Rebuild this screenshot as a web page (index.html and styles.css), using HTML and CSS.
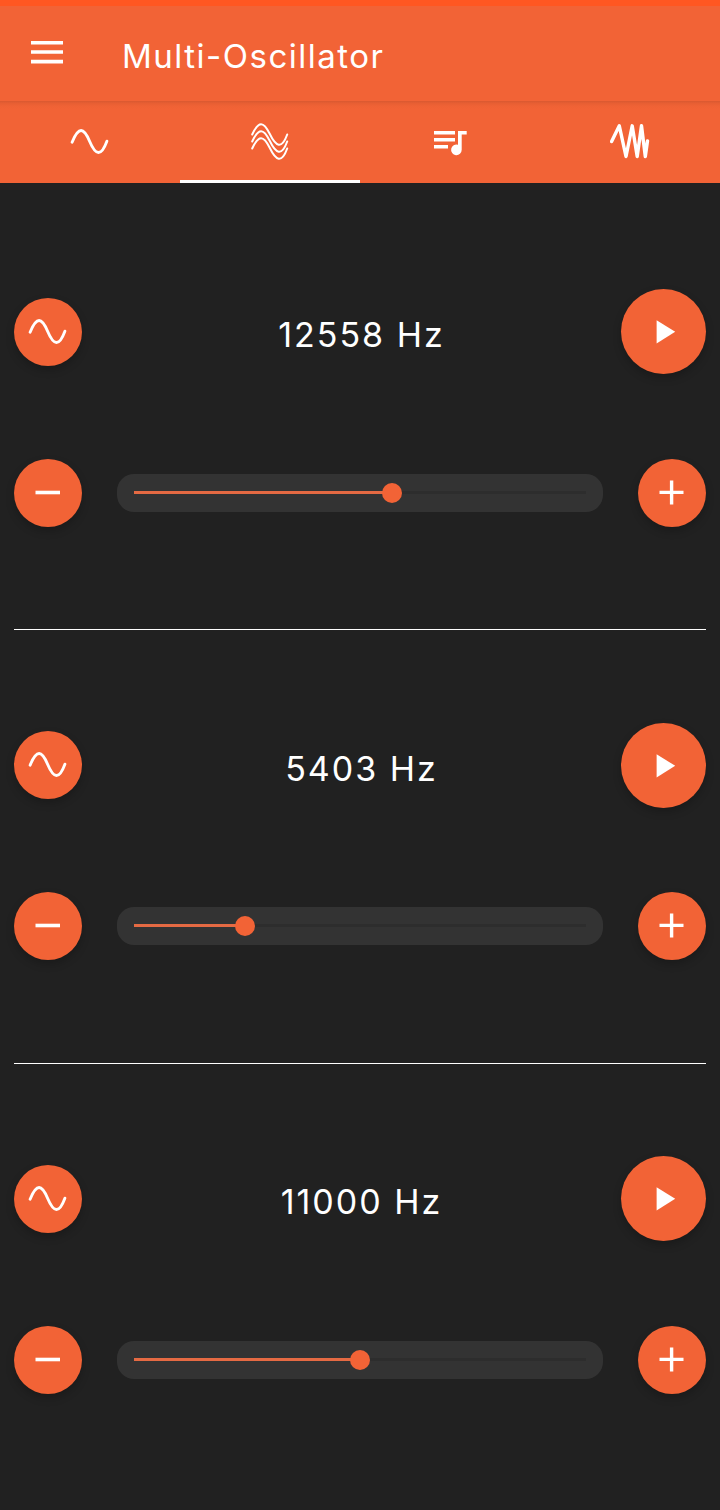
FILE: index.html
```html
<!DOCTYPE html>
<html lang="en">
<head>
<meta charset="utf-8">
<title>Multi-Oscillator</title>
<link rel="stylesheet" href="styles.css">
</head>
<body>
<svg class="defs" width="0" height="0">
  <symbol id="wave" viewBox="0 0 40 28"><path d="M2.100 14.200C8.700-1.700 13.700-.700 19.700 13.500S31.200 28.700 36.900 13.200" fill="none" stroke="currentColor" stroke-width="2.900" stroke-linecap="round"/></symbol>
  <symbol id="minus" viewBox="0 0 26 26"><path d="M.500 10.700h24.500v3.600H.500z" fill="currentColor"/></symbol>
  <symbol id="plus" viewBox="0 0 26 26"><path d="M.500 10.700h10.400V.500h3.400v10.200h10.200v3.400H14.300v10.400h-3.400V14.100H.500z" fill="currentColor"/></symbol>
  <symbol id="play" viewBox="0 0 20 24"><path d="M.600.200v23.300L19.200 11.800z" fill="currentColor"/></symbol>
</svg>
<div class="status"></div>
<header class="toolbar">
  <svg class="menu" viewBox="0 0 32 24"><path d="M0 0h32v3.600H0zM0 9.200h32v3.600H0zM0 18.700h32v3.800H0z" fill="currentColor"/></svg>
  <h1 class="title">Multi-Oscillator</h1>
</header>
<nav class="tabs">
  <div class="tab"><svg class="wave"><use href="#wave"/></svg></div>
  <div class="tab active"><svg class="waves" viewBox="0 0 40 40"><g fill="none" stroke="currentColor" stroke-width="2" stroke-linecap="round"><path d="M2.200 12.500C8.700-1.700 13.700-.700 19.700 11.800S31.700 28 37.200 12.500"/><path d="M2.200 19.500C8.700 5.300 13.700 6.300 19.700 18.800S31.700 35 37.200 19.500"/><path d="M2.200 26.500C8.700 12.300 13.700 13.300 19.700 25.800S31.700 42 37.200 26.500"/></g></svg></div>
  <div class="tab"><svg class="queue" viewBox="0 0 34 28"><path d="M1 3h21v3.500H1zM1 10h21v3.500H1zM1 17h14v3.500H1zM25 3h8.700v3.600h-5v15.200a5.300 5.300 0 1 1-3.700-5z" fill="currentColor"/></svg></div>
  <div class="tab"><svg class="noise" viewBox="0 0 40 36"><path d="M1.600 17.500 9.300 1.800 16 32.500 22.200 1.800 27.200 32.500 31.500 1.800 35.300 32.500 37.500 17" fill="none" stroke="currentColor" stroke-width="3.400" stroke-linecap="round" stroke-linejoin="round"/></svg></div>
</nav>
<main class="panel">
  <section class="osc">
    <div class="row top"><button class="fab"><svg class="wave"><use href="#wave"/></svg></button><span class="freq">12558 Hz</span><button class="fab large"><svg class="play"><use href="#play"/></svg></button></div>
    <div class="row"><button class="fab"><svg class="sign"><use href="#minus"/></svg></button><div class="slider"><div class="track"><div class="fill" style="width:258px"></div><div class="thumb"></div></div></div><button class="fab"><svg class="sign"><use href="#plus"/></svg></button></div>
  </section>
  <section class="osc second">
    <div class="row top"><button class="fab"><svg class="wave"><use href="#wave"/></svg></button><span class="freq">5403 Hz</span><button class="fab large"><svg class="play"><use href="#play"/></svg></button></div>
    <div class="row"><button class="fab"><svg class="sign"><use href="#minus"/></svg></button><div class="slider"><div class="track"><div class="fill" style="width:111px"></div><div class="thumb"></div></div></div><button class="fab"><svg class="sign"><use href="#plus"/></svg></button></div>
  </section>
  <section class="osc third">
    <div class="row top"><button class="fab"><svg class="wave"><use href="#wave"/></svg></button><span class="freq">11000 Hz</span><button class="fab large"><svg class="play"><use href="#play"/></svg></button></div>
    <div class="row"><button class="fab"><svg class="sign"><use href="#minus"/></svg></button><div class="slider"><div class="track"><div class="fill" style="width:226px"></div><div class="thumb"></div></div></div><button class="fab"><svg class="sign"><use href="#plus"/></svg></button></div>
  </section>
</main>
</body>
</html>
```
FILE: styles.css
```css
* { box-sizing: border-box; }
body {
  margin: 0;
  height: 1510px;
  overflow: hidden;
  background: #212121;
  color: #fff;
  font-family: Inter, Roboto, sans-serif;
}
svg { display: block; flex: none; }
.defs { position: absolute; }
.status { height: 6px; background: #ff5722; }
.toolbar {
  height: 95px;
  display: flex;
  align-items: center;
  padding: 0 31px;
  background: #f26336;
}
.menu { width: 32px; height: 24px; margin-bottom: 1px; }
.title {
  margin: 4px 0 0 59px;
  font-size: 33px;
  line-height: 40px;
  font-weight: 400;
  letter-spacing: 1.5px;
  white-space: nowrap;
}
.tabs {
  height: 82px;
  display: grid;
  grid-template-columns: repeat(4, 1fr);
  background: linear-gradient(#d95930, #e65e33 2px, #ef6235 5px, #f26336 8px);
}
.tab {
  display: flex;
  align-items: center;
  justify-content: center;
  border-bottom: 3px solid transparent;
}
.tab.active { border-color: #fff; }
.wave { width: 40px; height: 28px; }
.tab .wave { margin: 2px 1px 0 0; }
.waves { width: 40px; height: 40px; margin-top: 2px; }
.queue { width: 34px; height: 28px; margin-top: 3px; }
.noise { width: 40px; height: 36px; margin-top: 2px; }
.panel { padding: 13px 14px 0; }
.osc {
  height: 434px;
  padding-top: 93px;
  border-bottom: 1px solid #fff;
}
.row { display: flex; align-items: center; justify-content: space-between; }
.top { height: 85px; margin-bottom: 85px; }
.second .top { margin-bottom: 84px; }
.second .top .fab:first-child { margin-bottom: 1px; }
.third { height: 432px; padding-top: 92px; border: 0; }
.fab {
  flex: none;
  width: 68px;
  height: 68px;
  padding: 0;
  border: 0;
  border-radius: 50%;
  display: flex;
  align-items: center;
  justify-content: center;
  color: #fff;
  background: #f26336;
  box-shadow: 0 4px 9px rgba(0, 0, 0, .22);
}
.fab .wave { margin-right: 1px; }
.large { width: 85px; height: 85px; }
.sign { width: 26px; height: 26px; }
.play { width: 20px; height: 24px; margin-left: 4px; }
.freq {
  flex: 1;
  margin: 6px 0 0 20px;
  text-align: center;
  font-size: 34px;
  line-height: 40px;
  font-weight: 400;
  letter-spacing: 2px;
}
.slider {
  width: 486px;
  height: 38px;
  padding: 17px 17px 18px;
  border-radius: 17px;
  background: #333;
}
.track { height: 3px; display: flex; align-items: center; background: #2d2d2d; }
.fill { height: 3px; background: #e56a43; }
.thumb {
  flex: none;
  width: 20px;
  height: 20px;
  margin: 1px 0 0 -10px;
  border-radius: 50%;
  background: #f26336;
}
```
